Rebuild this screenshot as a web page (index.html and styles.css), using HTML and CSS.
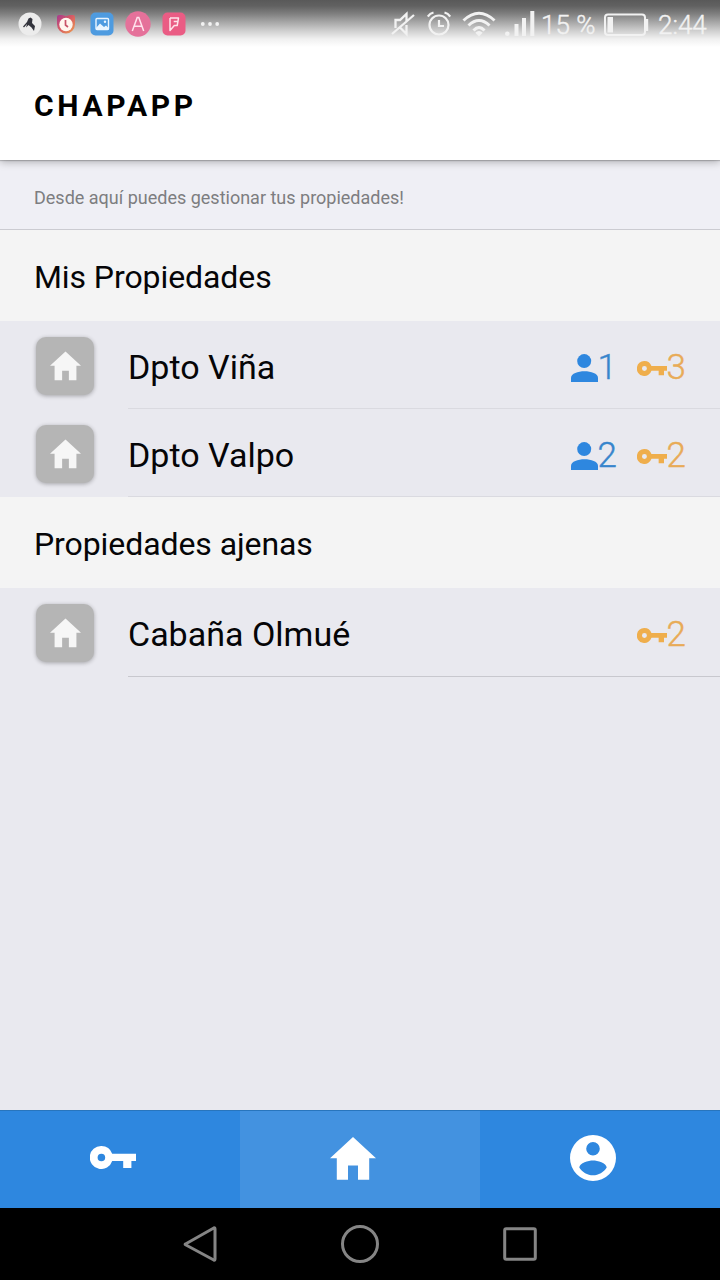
FILE: index.html
```html
<!DOCTYPE html>
<html lang="es">
<head>
<meta charset="utf-8">
<title>Chapapp</title>
<link rel="stylesheet" href="styles.css">
</head>
<body>
<svg class="defs" width="0" height="0" aria-hidden="true">
  <symbol id="home" viewBox="0 0 46 43"><path d="M23 0 46 21.3H39.2V42.7H28V28.6H18V42.7H6.8V21.3H0Z"/></symbol>
  <symbol id="key" viewBox="0 0 46 23"><path fill-rule="evenodd" d="M11.4 0A11.5 11.5 0 0 1 22.2 7.8H46V15H41.4V22H33.2V15H22.2A11.5 11.5 0 1 1 11.4 0ZM11.4 7.7a3.8 3.8 0 1 0 0 7.6 3.8 3.8 0 0 0 0-7.6Z"/></symbol>
  <symbol id="person" viewBox="0 0 28 28"><circle cx="13.2" cy="7.1" r="7"/><path d="M0 28V24C0 19.500 7 17.300 13.500 17.300S27 19.500 27 24V28Z"/></symbol>
</svg>
<div class="phone">
  <header class="top">
    <div class="status">
      <div class="notifications">
        <svg viewBox="0 0 36 36"><circle cx="18" cy="18" r="11.500" fill="#ececec"/><path d="M11 20.500 15 16 16.500 12.500 18.500 11.500 20.500 13 20 17 23 20 22 25 19.500 21.500 16.500 19 14 21.500 15 18 12 21.500Z" fill="#33343d"/></svg>
        <svg viewBox="0 0 36 36"><defs><linearGradient id="clock" x1="0" y1="0" x2="1" y2="1"><stop offset="0" stop-color="#a63a90"/><stop offset=".45" stop-color="#d65a64"/><stop offset="1" stop-color="#efa04f"/></linearGradient></defs><path d="M9 11Q9 9 11 9H14L18 10 22 9H25Q27 9 27 11V18A9 9.500 0 0 1 9 18Z" fill="url(#clock)"/><circle cx="18" cy="18.500" r="6.700" fill="#fff6ee"/><path d="M17.500 14V19L20 21" fill="none" stroke="#c85368" stroke-width="1.700"/></svg>
        <svg viewBox="0 0 36 36"><rect x="6.500" y="6.500" width="23" height="23" rx="5" fill="#4e9be0"/><rect x="12" y="12.500" width="12.500" height="11" rx="1" fill="none" stroke="#eaf5ff" stroke-width="1.400"/><path d="M12 22 16 17.500 20 21 22 19.500 24.500 22V24H12Z" fill="#eaf5ff"/><circle cx="21" cy="15.800" r="1.200" fill="#eaf5ff"/></svg>
        <svg viewBox="0 0 36 36"><circle cx="18" cy="18" r="12.700" fill="#e5719a"/><path d="M12.300 25 17.200 11.500H18.800L23.700 25M14.200 20.300H21.800" fill="none" stroke="#ffe3ed" stroke-width="1.500"/></svg>
        <svg viewBox="0 0 36 36"><rect x="6.500" y="6.500" width="23" height="23" rx="5" fill="#ea5c84"/><path d="M14 12H22.500L21.900 15.600H17.700M21.900 15.600 21.200 19.500H18.300L14 24.500V12" fill="none" stroke="#ffe3ea" stroke-width="1.500" stroke-linejoin="round"/></svg>
        <svg viewBox="0 0 36 36" fill="#f2f2f2"><circle cx="10.800" cy="18" r="1.900"/><circle cx="18" cy="18" r="1.900"/><circle cx="25.200" cy="18" r="1.900"/></svg>
      </div>
      <div class="system">
        <svg class="mute" viewBox="0 0 24 26"><path d="M4.500 17V9H9L15.500 3V11M9.500 17 15.500 23V14M1 23 23 4" fill="none" stroke="currentColor" stroke-width="2.300"/></svg>
        <svg class="alarm" viewBox="0 0 24 26"><circle cx="12" cy="14" r="9.500" fill="none" stroke="currentColor" stroke-width="2.200"/><path d="M12 9V15H17M.8 5.500Q3 2.500 6.500 1.500M23.200 5.500Q21 2.500 17.500 1.500" fill="none" stroke="currentColor" stroke-width="2.200"/></svg>
        <svg class="wifi" viewBox="0 0 34 26"><path d="M1.500 9.500Q17-5 32.500 9.500M6.500 14.500Q17 4.500 27.500 14.500M11.500 19.500Q17 13.500 22.500 19.500" fill="none" stroke="currentColor" stroke-width="3"/><path d="M17 25.500 13.300 21.700Q17 18.500 20.700 21.700Z" fill="currentColor"/></svg>
        <svg class="signal" viewBox="0 0 30 26" fill="currentColor"><circle cx="2.300" cy="22.700" r="2.300"/><rect x="9.500" y="13" width="4" height="12"/><rect x="17" y="7" width="4" height="18"/><rect x="25.300" y="0" width="4" height="25"/></svg>
        <span class="percent">15 %</span>
        <svg class="battery" viewBox="0 0 45 24"><rect x="1" y="1.500" width="40" height="20.500" rx="3" fill="none" stroke="currentColor" stroke-width="2"/><rect x="3.500" y="4" width="5.500" height="15.500" fill="currentColor"/><path d="M43 6V18" stroke="currentColor" stroke-width="2.400"/></svg>
        <span class="time">2:44</span>
      </div>
    </div>
    <h1 class="title">CHAPAPP</h1>
  </header>
  <main class="content">
    <p class="intro">Desde aquí puedes gestionar tus propiedades!</p>
    <h2 class="section">Mis Propiedades</h2>
    <div class="row">
      <span class="tile"><svg><use href="#home"/></svg></span>
      <div class="detail"><span class="name">Dpto Viña</span>
        <span class="count people"><svg><use href="#person"/></svg>1</span>
        <span class="count keys"><svg><use href="#key"/></svg>3</span></div>
    </div>
    <div class="row">
      <span class="tile"><svg><use href="#home"/></svg></span>
      <div class="detail"><span class="name">Dpto Valpo</span>
        <span class="count people"><svg><use href="#person"/></svg>2</span>
        <span class="count keys"><svg><use href="#key"/></svg>2</span></div>
    </div>
    <h2 class="section">Propiedades ajenas</h2>
    <div class="row last">
      <span class="tile"><svg><use href="#home"/></svg></span>
      <div class="detail"><span class="name">Cabaña Olmué</span>
        <span class="count keys"><svg><use href="#key"/></svg>2</span></div>
    </div>
  </main>
  <nav class="tabs">
    <a class="tab"><svg class="tab-key"><use href="#key"/></svg></a>
    <a class="tab active"><svg class="tab-home"><use href="#home"/></svg></a>
    <a class="tab"><svg class="tab-account" viewBox="0 0 46 46"><path fill-rule="evenodd" d="M23 0a23 23 0 1 0 0 46 23 23 0 0 0 0-46ZM23 6.900a6.800 6.800 0 1 1 0 13.600 6.800 6.800 0 0 1 0-13.600ZM23 40.200C17.400 40.200 12.300 37.300 9.300 32.400 9.500 27.900 18.500 25.400 23 25.400S36.500 27.900 36.700 32.400C33.700 37.300 28.600 40.200 23 40.200Z"/></svg></a>
  </nav>
  <div class="softkeys">
    <svg viewBox="0 0 40 40"><path d="M5.500 20 33.800 4Q35 3.500 35 5V35Q35 36.500 33.800 36L5.500 20.800Q4.700 20.300 5.500 20Z"/></svg>
    <svg viewBox="0 0 40 40"><circle cx="20" cy="20" r="17.500"/></svg>
    <svg viewBox="0 0 40 40"><rect x="4.700" y="4.700" width="30.600" height="30.600" rx="1.500"/></svg>
  </div>
</div>
</body>
</html>
```
FILE: styles.css
```css
* { box-sizing: border-box; }
body { margin: 0; font-family: Roboto, sans-serif; color: #050507; }
h1, h2, p { margin: 0; font-weight: 400; }
svg { display: block; flex: none; }
.defs { position: absolute; }
.phone { width: 720px; height: 1280px; display: flex; flex-direction: column; background: #e9e9ef; overflow: hidden; }

.top { position: relative; z-index: 1; height: 160px; background: #fff; box-shadow: 0 1px 1px rgba(0,0,0,.18), 0 2px 8px rgba(0,0,0,.28); }
.status { height: 48px; padding: 0 12px; display: flex; justify-content: space-between; color: #f2f2f2;
  background: linear-gradient(#595959 0, #616161 6px, #808080 14px, #a6a6a6 22px, #d0d0d0 31px, #f0f0f0 39px, #fff 47px); }
.notifications { display: flex; padding-top: 6px; }
.notifications svg { width: 36px; height: 36px; }
.system { display: flex; align-items: center; font-weight: 300; font-size: 26px; line-height: 48px; white-space: nowrap; -webkit-text-stroke: .4px; }
.mute { width: 24px; height: 26px; margin-right: 12px; }
.alarm { width: 24px; height: 26px; margin-right: 11px; }
.wifi { width: 34px; height: 26px; margin-right: 9px; }
.signal { width: 30px; height: 26px; margin-right: 6px; }
.percent { width: 63px; padding-top: 2px; }
.battery { width: 45px; height: 24px; margin: 2px 9px 0 0; }
.time { width: 50px; padding-top: 2px; }
.title { padding: 40px 34px 0; font-size: 30px; line-height: 36px; font-weight: 700; letter-spacing: 3.7px; color: #000; }

.content { flex: 1; }
.intro { height: 70px; padding: 8px 34px 0; background: #efeff5; border-bottom: 1px solid #cbcbd1; font-size: 18px; line-height: 60px; color: #7d7d80; }
.section { height: 91px; padding: 0 34px; background: #f4f4f4; font-size: 32px; line-height: 95px; letter-spacing: -0.08px; }
.row { height: 88px; padding-left: 36px; display: flex; align-items: center; }
.tile { width: 58px; height: 58px; margin: 2px 34px 0 0; border-radius: 10px; background: #b5b5b5; box-shadow: 0 1px 4px rgba(0,0,0,.3); display: flex; align-items: center; justify-content: center; }
.tile svg { width: 31px; height: 30px; fill: #f6f6f6; }
.detail { flex: 1; height: 88px; padding: 4px 34px 0 0; display: flex; align-items: center; border-bottom: 1px solid #dadae0; }
.last .detail { height: 89px; border-color: #c8c8ce; align-self: flex-start; }
.name { flex: 1; font-size: 34px; }
.count { display: flex; align-items: center; padding-top: 2px; font-size: 35px; font-weight: 300; -webkit-text-stroke: .4px; }
.last .count { padding-top: 0; }
.people { width: 66px; color: #3785cc; }
.people svg { width: 28px; height: 28px; fill: #2e87df; margin-right: -1px; }
.keys { color: #e8ab57; }
.keys svg { width: 30px; height: 15px; margin-top: 2px; fill: #efae4c; }

.tabs { height: 98px; display: flex; border-top: 1px solid #2875bd; background: #2e87df; }
.tab { flex: 1; display: flex; align-items: center; justify-content: center; padding: 0 14px 4px 0; }
.tab svg { fill: #fff; }
.tab-key { width: 46px; height: 23px; }
.active { background: #4392e0; padding-bottom: 3px; }
.tab-home { width: 46px; height: 43px; }
.tab-account { width: 46px; height: 46px; }

.softkeys { height: 72px; background: #000; display: flex; justify-content: center; align-items: center; gap: 120px; }
.softkeys svg { width: 40px; height: 40px; fill: none; stroke: #858585; stroke-width: 3; stroke-linejoin: round; }
```
